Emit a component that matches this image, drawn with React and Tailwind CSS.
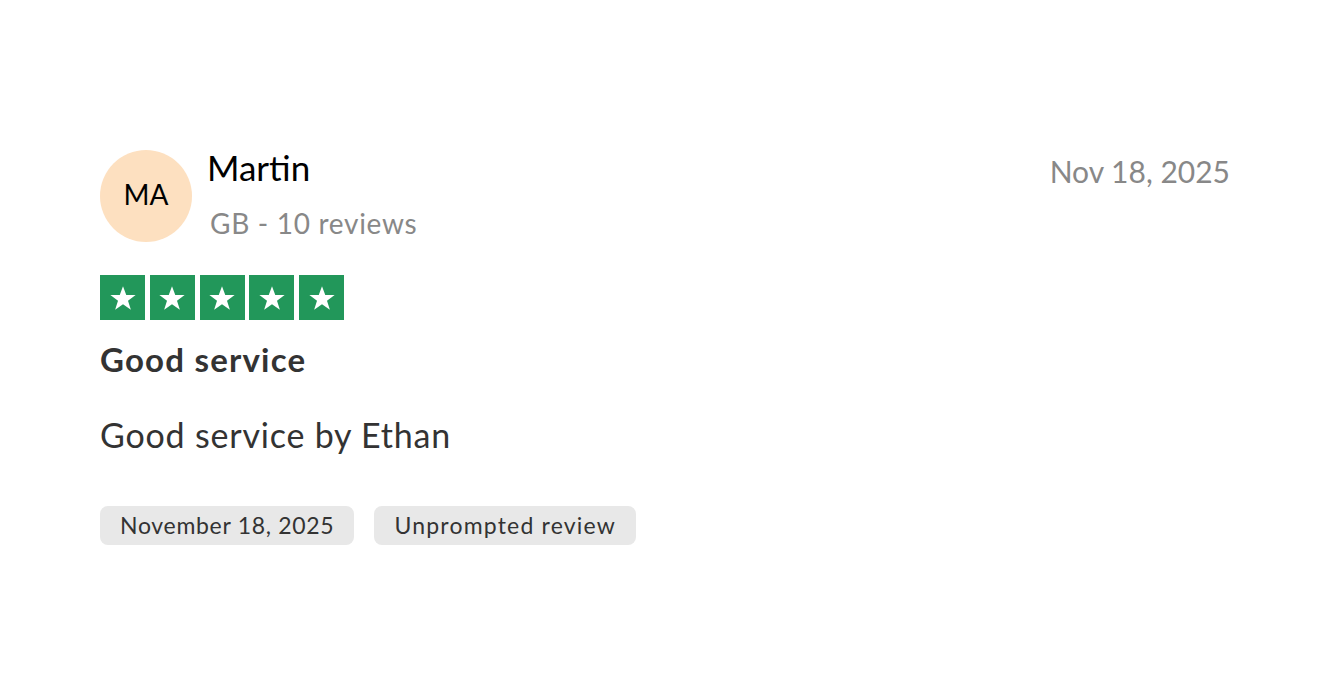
import React from 'react';

const Star = () => (
  <div className="w-[45px] h-[45px] bg-[#22975a] flex items-center justify-center">
    <svg viewBox="0 0 24 24" className="w-[30px] h-[30px]" fill="#ffffff">
      <path d="M12 2.5l2.6 7.1h7.5l-6.1 4.5 2.3 7.3L12 16.9l-6.3 4.5 2.3-7.3-6.1-4.5h7.5z" />
    </svg>
  </div>
);

export default function App() {
  return (
    <div className="min-h-screen bg-white font-['Lato',sans-serif] px-[100px] pt-[150px]">
      <div className="flex items-start justify-between pr-[4px]">
        <div className="flex items-start gap-[15px]">
          <div className="w-[92px] h-[92px] rounded-full bg-[#fde0c0] flex items-center justify-center text-[28px] text-black pb-[5px]">
            MA
          </div>
          <div className="flex flex-col">
            <div className="text-[35px] leading-[40px] text-black -mt-[3px]">Martin</div>
            <div className="text-[28px] leading-[34px] text-[#888888] tracking-[0.7px] mt-[19px] ml-[3px]">GB - 10 reviews</div>
          </div>
        </div>
        <div className="text-[30px] leading-[40px] text-[#888888] pt-[1px]">Nov 18, 2025</div>
      </div>

      <div className="flex gap-[4.75px] mt-[33px]">
        <Star />
        <Star />
        <Star />
        <Star />
        <Star />
      </div>

      <h2 className="text-[33px] leading-[40px] font-bold text-[#333333] tracking-[1.2px] mt-[19px]">Good service</h2>

      <p className="text-[34px] leading-[40px] text-[#333333] tracking-[0.8px] mt-[36px]">Good service by Ethan</p>

      <div className="flex gap-[20px] mt-[51px]">
        <span className="h-[39px] px-[20px] rounded-[8px] bg-[#e8e8e8] text-[23px] tracking-[0.7px] text-[#333333] flex items-center">November 18, 2025</span>
        <span className="h-[39px] px-[20px] rounded-[8px] bg-[#e8e8e8] text-[23px] tracking-[1.2px] text-[#333333] flex items-center">Unprompted review</span>
      </div>
    </div>
  );
}
